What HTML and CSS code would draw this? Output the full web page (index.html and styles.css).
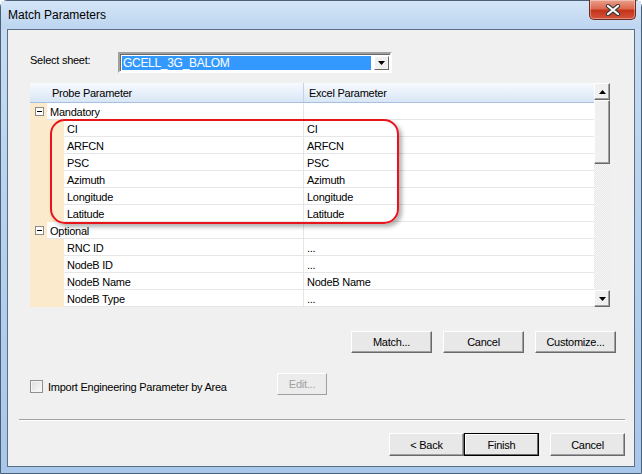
FILE: index.html
```
<!DOCTYPE html>
<html lang="en">

<head>
    <meta charset="UTF-8">
    <title>Match Parameters</title>
    <link rel="stylesheet" href="styles.css">
</head>

<body>
    <div class="window">
        <div class="titlebar">
            <span class="title">Match Parameters</span>
            <div class="close-btn">
                <svg width="16" height="12" viewBox="0 0 16 12">
                    <path d="M3 2 L13 10 M13 2 L3 10" stroke="#3a3a3a" stroke-width="4.2" stroke-linecap="round" />
                    <path d="M3 2 L13 10 M13 2 L3 10" stroke="#ffffff" stroke-width="2.2" stroke-linecap="round" />
                </svg>
            </div>
        </div>
        <div class="frame">
            <div class="client">
                <div class="sheet-row">
                    <label class="sheet-label">Select sheet:</label>
                    <div class="combo">
                        <span class="combo-text">GCELL_3G_BALOM</span>
                        <span class="combo-btn">
                            <svg width="7" height="4" viewBox="0 0 7 4"><path d="M0 0 H7 L3.5 4 Z" fill="#000" /></svg>
                        </span>
                    </div>
                </div>

                <div class="grid">
                    <div class="grid-main">
                        <div class="grid-head">
                            <div class="head-a">Probe Parameter</div>
                            <div class="head-b">Excel Parameter</div>
                        </div>

                        <div class="group-row">
                            <div class="indent"><span class="expander"></span></div>
                            <div class="cell-a"><span class="group-label">Mandatory</span></div>
                            <div class="cell-b"></div>
                        </div>
                        <div class="row">
                            <div class="indent wide"></div>
                            <div class="cell-a">CI</div>
                            <div class="cell-b">CI</div>
                        </div>
                        <div class="row">
                            <div class="indent wide"></div>
                            <div class="cell-a">ARFCN</div>
                            <div class="cell-b">ARFCN</div>
                        </div>
                        <div class="row">
                            <div class="indent wide"></div>
                            <div class="cell-a">PSC</div>
                            <div class="cell-b">PSC</div>
                        </div>
                        <div class="row">
                            <div class="indent wide"></div>
                            <div class="cell-a">Azimuth</div>
                            <div class="cell-b">Azimuth</div>
                        </div>
                        <div class="row">
                            <div class="indent wide"></div>
                            <div class="cell-a">Longitude</div>
                            <div class="cell-b">Longitude</div>
                        </div>
                        <div class="row">
                            <div class="indent wide"></div>
                            <div class="cell-a">Latitude</div>
                            <div class="cell-b">Latitude</div>
                        </div>

                        <div class="group-row">
                            <div class="indent"><span class="expander"></span></div>
                            <div class="cell-a"><span class="group-label">Optional</span></div>
                            <div class="cell-b"></div>
                        </div>
                        <div class="row">
                            <div class="indent wide"></div>
                            <div class="cell-a">RNC ID</div>
                            <div class="cell-b">...</div>
                        </div>
                        <div class="row">
                            <div class="indent wide"></div>
                            <div class="cell-a">NodeB ID</div>
                            <div class="cell-b">...</div>
                        </div>
                        <div class="row">
                            <div class="indent wide"></div>
                            <div class="cell-a">NodeB Name</div>
                            <div class="cell-b">NodeB Name</div>
                        </div>
                        <div class="row">
                            <div class="indent wide"></div>
                            <div class="cell-a">NodeB Type</div>
                            <div class="cell-b">...</div>
                        </div>
                    </div>

                    <div class="scrollbar">
                        <div class="sb-btn">
                            <svg width="7" height="4" viewBox="0 0 7 4"><path d="M0 4 H7 L3.5 0 Z" fill="#000" /></svg>
                        </div>
                        <div class="sb-thumb"></div>
                        <div class="sb-track"></div>
                        <div class="sb-btn">
                            <svg width="7" height="4" viewBox="0 0 7 4"><path d="M0 0 H7 L3.5 4 Z" fill="#000" /></svg>
                        </div>
                    </div>

                    <!-- annotation drawn over the required rows -->
                    <div class="highlight"></div>
                </div>

                <div class="action-row">
                    <button class="btn">Match...</button>
                    <button class="btn">Cancel</button>
                    <button class="btn">Customize...</button>
                </div>

                <div class="option-row">
                    <div class="check-group">
                        <span class="checkbox"></span>
                        <span class="check-label">Import Engineering Parameter by Area</span>
                    </div>
                    <button class="btn btn-edit" disabled>Edit...</button>
                </div>

                <div class="separator"></div>

                <div class="nav-row">
                    <button class="btn btn-nav">&lt; Back</button>
                    <button class="btn btn-nav btn-default">Finish</button>
                    <button class="btn btn-nav btn-last">Cancel</button>
                </div>
            </div>
        </div>
    </div>
</body>

</html>
```

FILE: styles.css
```
* {
    box-sizing: border-box;
}

body {
    margin: 0;
    width: 642px;
    height: 474px;
    overflow: hidden;
    font-family: 'Liberation Sans', Tahoma, Arial, sans-serif;
    font-size: 11px;
    letter-spacing: -0.25px;
    color: #000;
    background: #ffffff;
}

.window {
    width: 642px;
    height: 474px;
    border: 1px solid #4a5f78;
    border-radius: 7px 7px 0 0;
    background: linear-gradient(180deg, #c9ddf2 0%, #b9d3ee 40%, #a9c7ea 100%);
    display: flex;
    flex-direction: column;
}

.titlebar {
    height: 28px;
    display: flex;
    align-items: flex-start;
    background: linear-gradient(180deg, #d4e5f7 0%, #bdd5f0 100%);
}

.title {
    font-size: 12px;
    letter-spacing: 0;
    padding-left: 7px;
    padding-top: 7px;
    color: #000;
}

.close-btn {
    margin-left: auto;
    margin-right: 5px;
    margin-top: -1px;
    width: 47px;
    height: 20px;
    border: 1px solid #6b2b20;
    border-top: none;
    border-radius: 0 0 5px 5px;
    background: linear-gradient(180deg, #eaa08c 0%, #dc6a50 45%, #c4341a 55%, #d5533a 100%);
    box-shadow: inset 0 0 0 1px rgba(255, 255, 255, 0.35);
    display: flex;
    align-items: center;
    justify-content: center;
}

.frame {
    flex: 1;
    padding: 0 6px 6px 6px;
}

.client {
    height: 100%;
    border: 1px solid #5a6f86;
    background: #f0f0f0;
    display: flex;
    flex-direction: column;
}

/* sheet selector */
.sheet-row {
    display: flex;
    align-items: center;
    margin-top: 22px;
    padding-left: 22px;
}

.sheet-label {
    width: 88px;
    margin-top: -6px;
}

.combo {
    width: 274px;
    height: 21px;
    border: 2px solid;
    border-color: #a0a0a0 #ffffff #ffffff #a0a0a0;
    box-shadow: inset 1px 1px 0 #696969;
    background: #fff;
    display: flex;
    align-items: stretch;
    padding: 2px 1px 1px 2px;
}

.combo-text {
    flex: 1;
    background: #3399ff;
    color: #fff;
    font-size: 12px;
    letter-spacing: -0.3px;
    line-height: 15px;
    padding-left: 1px;
    margin-right: 3px;
}

.combo-btn {
    width: 15px;
    border: 1px solid;
    border-color: #fff #696969 #696969 #fff;
    background: #f0f0f0;
    display: flex;
    align-items: center;
    justify-content: center;
}

/* parameter grid */
.grid {
    position: relative;
    margin: 10px 0 0 22px;
    width: 580px;
    height: 224px;
    display: flex;
    background: #fff;
}

.grid-main {
    width: 564px;
}

.grid-head {
    height: 20px;
    display: flex;
    background: linear-gradient(180deg, #f7fafe 0%, #e8f0fa 50%, #d9e6f6 100%);
    border-bottom: 1px solid #a5c0e0;
}

.head-a {
    flex: 1;
    padding: 4px 0 0 22px;
}

.head-b {
    width: 291px;
    border-left: 1px solid #c3d3e6;
    padding: 4px 0 0 5px;
}

.row,
.group-row {
    height: 17px;
    display: flex;
}

.indent {
    width: 17px;
    background: #fbeacb;
    display: flex;
    align-items: center;
}

.indent.wide {
    width: 34px;
}

.expander {
    width: 9px;
    height: 9px;
    margin-left: 5px;
    border: 1px solid #8a8a8a;
    background: #fff;
    position: relative;
}

.expander::after {
    content: "";
    position: absolute;
    left: 1px;
    top: 3px;
    width: 5px;
    height: 1px;
    background: #000;
}

.cell-a {
    flex: 1;
    padding: 3px 0 0 3px;
    border-bottom: 1px solid #e6e6e6;
}

.cell-b {
    width: 291px;
    padding: 3px 0 0 3px;
    border-left: 1px solid #e6e6e6;
    border-bottom: 1px solid #e6e6e6;
}

.group-row .cell-a {
    padding: 0;
}

.group-label {
    display: inline-block;
    background: #fff;
    padding: 3px 2px 0 3px;
    height: 16px;
}

.scrollbar {
    width: 16px;
    display: flex;
    flex-direction: column;
    background: #f0f0f0;
}

.sb-btn {
    height: 17px;
    border: 1px solid;
    border-color: #fff #696969 #696969 #fff;
    box-shadow: inset -1px -1px 0 #a0a0a0;
    background: #f0f0f0;
    display: flex;
    align-items: center;
    justify-content: center;
}

.sb-thumb {
    height: 64px;
    border: 1px solid;
    border-color: #fff #696969 #696969 #fff;
    box-shadow: inset -1px -1px 0 #a0a0a0;
    background: #f0f0f0;
}

.sb-track {
    flex: 1;
    background-color: #f4f4f4;
    background-image: repeating-conic-gradient(#e6e6e6 0 25%, #f8f8f8 0 50%);
    background-size: 2px 2px;
}

.highlight {
    position: absolute;
    left: 20px;
    top: 36px;
    width: 349px;
    height: 105px;
    border: 2px solid #e8141b;
    border-radius: 15px;
    box-shadow: 3px 3px 4px rgba(0, 0, 0, 0.3);
}

/* buttons */
.btn {
    font-family: 'Liberation Sans', Tahoma, Arial, sans-serif;
    font-size: 11px;
    letter-spacing: -0.25px;
    color: #000;
    height: 22px;
    padding: 0;
    border: 1px solid;
    border-color: #fff #696969 #696969 #fff;
    box-shadow: inset -1px -1px 0 #a0a0a0;
    background: #e8e8e8;
}

.action-row {
    display: flex;
    justify-content: flex-end;
    gap: 11px;
    margin-top: 24px;
    padding-right: 18px;
}

.action-row .btn {
    width: 81px;
}

.option-row {
    display: flex;
    align-items: center;
    margin-top: 20px;
    padding-left: 22px;
}

.check-group {
    width: 247px;
    display: flex;
    align-items: center;
    gap: 5px;
    margin-top: 5px;
}

.checkbox {
    width: 13px;
    height: 13px;
    border: 1px solid #8e8f8f;
    background: linear-gradient(135deg, #dcdcdc 0%, #fbfbfb 100%);
    box-shadow: inset 0 0 0 1px #f4f4f4;
}

.btn-edit {
    width: 50px;
    color: #a0a0a0;
    border-color: #fff #a0a0a0 #a0a0a0 #fff;
    box-shadow: none;
    background: #ececec;
}

.separator {
    margin: 24px 9px 0 11px;
    border-top: 1px solid #a0a0a0;
    border-bottom: 1px solid #fff;
}

.nav-row {
    display: flex;
    justify-content: flex-end;
    margin-top: 12px;
    padding-right: 9px;
}

.btn-nav {
    width: 75px;
    height: 23px;
}

.btn-default {
    border: 1px solid #000;
    box-shadow: inset -1px -1px 0 #696969, inset 1px 1px 0 #fff;
}

.btn-last {
    margin-left: 11px;
}
```
